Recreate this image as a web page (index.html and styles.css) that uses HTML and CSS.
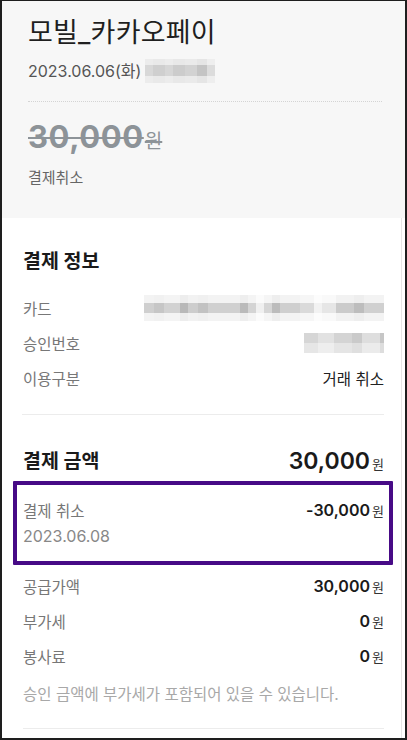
FILE: index.html
```html
<!DOCTYPE html>
<html lang="ko">
<head>
<meta charset="utf-8">
<title>결제 상세</title>
<link rel="stylesheet" href="styles.css">
</head>
<body>
<div class="frame">
  <section class="summary">
    <h1 class="merchant">모빌_카카오페이</h1>
    <div class="date-line">
      <span class="date">2023.06.06(화)</span>
      <span class="mosaic mosaic-time"></span>
    </div>
    <hr class="dotted">
    <div class="amount-struck"><span class="num">30,000</span><span class="unit">원</span></div>
    <div class="status">결제취소</div>
  </section>

  <section class="detail">
    <h2 class="heading">결제 정보</h2>
    <div class="rows">
      <div class="row"><span class="label">카드</span><span class="mosaic mosaic-card"></span></div>
      <div class="row"><span class="label">승인번호</span><span class="mosaic mosaic-auth"></span></div>
      <div class="row"><span class="label">이용구분</span><span class="value">거래 취소</span></div>
    </div>

    <hr class="rule rule-mid">

    <div class="total">
      <h2 class="heading">결제 금액</h2>
      <span class="total-amount"><span class="num">30,000</span><span class="unit">원</span></span>
    </div>

    <div class="cancel-box">
      <div class="cancel-line">
        <span class="label">결제 취소</span>
        <span class="money"><span class="num">-30,000</span><span class="unit">원</span></span>
      </div>
      <div class="cancel-date">2023.06.08</div>
    </div>

    <div class="rows rows-tax">
      <div class="row"><span class="label">공급가액</span><span class="money"><span class="num">30,000</span><span class="unit">원</span></span></div>
      <div class="row"><span class="label">부가세</span><span class="money"><span class="num">0</span><span class="unit">원</span></span></div>
      <div class="row"><span class="label">봉사료</span><span class="money"><span class="num">0</span><span class="unit">원</span></span></div>
    </div>

    <p class="note">승인 금액에 부가세가 포함되어 있을 수 있습니다.</p>

    <hr class="rule rule-end">
  </section>
</div>
</body>
</html>
```

FILE: styles.css
```css
* { box-sizing: border-box; }

html, body {
  margin: 0;
  padding: 0;
  background: #ffffff;
}

body {
  width: 407px;
  height: 740px;
  overflow: hidden;
  font-family: Inter, "Noto Sans CJK KR", sans-serif;
  color: #222;
}

.frame {
  width: 407px;
  height: 740px;
  border-left: 2px solid #1e1e1e;
  border-top: 1px solid #1e1e1e;
  border-right: 2px solid #1e1e1e;
  border-bottom: 2px solid #1e1e1e;
  box-shadow: inset -3px 0 0 #fff, inset -4px 0 0 #e6e6e6;
  background: #fff;
  display: flex;
  flex-direction: column;
  overflow: hidden;
}

/* top summary card */
.summary {
  background: #f7f7f7;
  padding: 14px 23px 24px 26px;
  height: 217px;
  display: flex;
  flex-direction: column;
}

.merchant {
  margin: 0;
  font-size: 27px;
  line-height: 36px;
  font-weight: 400;
  color: #1f1f1f;
  letter-spacing: 0.2px;
}

.date-line {
  margin-top: 8px;
  height: 24px;
  display: flex;
  align-items: center;
  gap: 4px;
}

.date {
  font-size: 16px;
  line-height: 24px;
  color: #555;
}

.dotted {
  margin: 18px 0 0;
  border: 0;
  border-top: 1px dotted #d4d4d4;
  height: 0;
}

.amount-struck {
  margin-top: 14px;
  height: 42px;
  display: flex;
  align-items: baseline;
  color: #8d9398;
  text-decoration: line-through;
  text-decoration-thickness: 2px;
  text-decoration-color: #8d9398;
}

.amount-struck .num {
  font-size: 31px;
  line-height: 42px;
  font-weight: 700;
  letter-spacing: 0.6px;
}

.amount-struck .unit {
  font-size: 19px;
  margin-left: 1px;
  font-weight: 400;
}

.status {
  margin-top: 9px;
  font-size: 15px;
  line-height: 22px;
  color: #666;
}

/* detail area */
.detail {
  padding: 30px 21px 0 21px;
  display: flex;
  flex-direction: column;
}

.heading {
  margin: 0;
  font-size: 19.5px;
  line-height: 26px;
  font-weight: 700;
  color: #1a1a1a;
}

.rows {
  margin-top: 16px;
  display: flex;
  flex-direction: column;
}

.row {
  height: 35px;
  display: flex;
  align-items: center;
  justify-content: space-between;
}

.label {
  font-size: 15.5px;
  color: #777;
}

.value {
  font-size: 15.5px;
  color: #222;
}

.rule {
  margin: 0;
  border: 0;
  border-top: 1px solid #ececec;
  height: 0;
}

.rule-mid { margin-top: 19px; margin-left: -1px; }

.total {
  margin-top: 30px;
  height: 32px;
  display: flex;
  align-items: center;
  justify-content: space-between;
}

.total .heading { font-size: 19.5px; }

.total-amount .num {
  font-size: 23px;
  font-weight: 600;
  color: #1a1a1a;
}

.total-amount .unit,
.money .unit {
  font-size: 13px;
  margin-left: 2px;
  color: #333;
}

.money .num {
  font-size: 16px;
  font-weight: 600;
  color: #1a1a1a;
}

.cancel-box {
  margin: 4px -9px 0 -10px;
  border: 4px solid #470a86;
  border-radius: 1px;
  padding: 12px 5px 12px 6px;
  display: flex;
  flex-direction: column;
}

.cancel-line {
  height: 26px;
  display: flex;
  align-items: center;
  justify-content: space-between;
}

.cancel-date {
  height: 26px;
  line-height: 26px;
  font-size: 16px;
  color: #888;
}

.rows-tax { margin-top: 3px; }

.note {
  margin: 11px 0 0;
  font-size: 15.5px;
  line-height: 22px;
  color: #a8a8a8;
}

.rule-end { margin-top: 22px; }

/* pixelated masks over private data */
.mosaic {
  display: inline-block;
  position: relative;
}

.mosaic-time {
  width: 70px;
  height: 24px;
  background: linear-gradient(90deg, #d8d8d8 0 8px, #cfcfcf 8px 20px, #d6d6d6 20px 28px, #cccccc 28px 40px, #d2d2d2 40px 52px, #c4c4c4 52px 62px, #dcdcdc 62px 70px);
  -webkit-mask: linear-gradient(180deg, rgba(0,0,0,0.35) 0 6px, #000 6px 17px, rgba(0,0,0,0.35) 17px);
  mask: linear-gradient(180deg, rgba(0,0,0,0.35) 0 6px, #000 6px 17px, rgba(0,0,0,0.35) 17px);
}

.mosaic-card {
  width: 240px;
  height: 26px;
  background: linear-gradient(90deg,
    #cfcfcf 0 10px, #c6c6c6 10px 20px, #d2d2d2 20px 36px, #b8b8b8 36px 44px,
    #cdcdcd 44px 54px, #c2c2c2 54px 64px, #d0d0d0 64px 96px, #bababa 96px 104px,
    #d4d4d4 104px 112px, #f0f0f0 112px 120px, #d6d6d6 120px 128px, #bcbcbc 128px 136px,
    #cfcfcf 136px 156px, #dadada 156px 170px, #f2f2f2 170px 178px, #e6e6e6 178px 192px,
    #cbcbcb 192px 210px, #bdbdbd 210px 220px, #d0d0d0 220px 240px);
  -webkit-mask: linear-gradient(180deg, rgba(0,0,0,0.25) 0 8px, #000 8px 18px, rgba(0,0,0,0.25) 18px);
  mask: linear-gradient(180deg, rgba(0,0,0,0.25) 0 8px, #000 8px 18px, rgba(0,0,0,0.25) 18px);
}

.mosaic-auth {
  width: 80px;
  height: 20px;
  background: linear-gradient(90deg, #d6d6d6 0 14px, #e2e2e2 14px 30px, #d4d4d4 30px 48px, #cacaca 48px 58px, #dedede 58px 76px, #c6c6c6 76px 80px);
  -webkit-mask: linear-gradient(180deg, #000 0 10px, rgba(0,0,0,0.6) 10px);
  mask: linear-gradient(180deg, #000 0 10px, rgba(0,0,0,0.6) 10px);
}
```
